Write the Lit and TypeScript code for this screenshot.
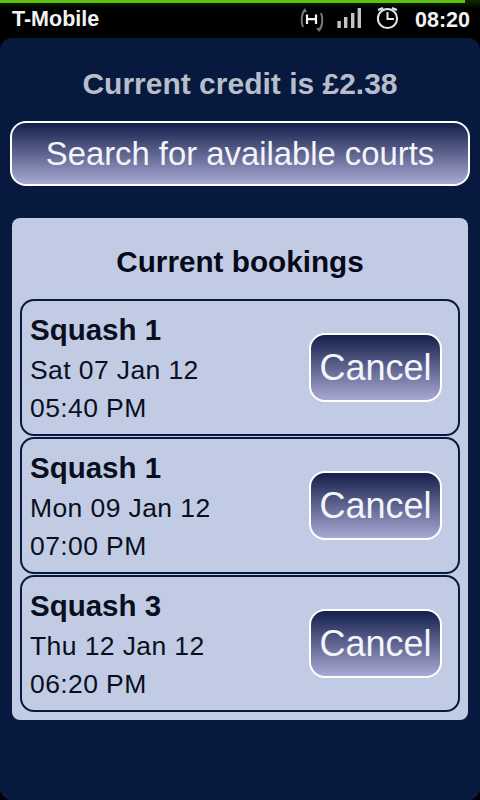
import { LitElement, html, css } from "lit";
import { customElement } from "lit/decorators.js";

const bookings = [
  { court: "Squash 1", date: "Sat 07 Jan 12", time: "05:40 PM" },
  { court: "Squash 1", date: "Mon 09 Jan 12", time: "07:00 PM" },
  { court: "Squash 3", date: "Thu 12 Jan 12", time: "06:20 PM" },
];

@customElement("app-root")
export class AppRoot extends LitElement {
  static styles = css`
    :host {
      display: block;
      width: 480px;
      height: 800px;
      background: #000;
      font-family: "Liberation Sans", Arial, sans-serif;
      overflow: hidden;
    }
    .status {
      height: 38px;
      box-sizing: border-box;
      position: relative;
      display: flex;
      align-items: center;
      padding: 0 10px 0 12px;
      color: #f2f2f2;
      background: linear-gradient(#0c2a00 0, #000 9px);
    }
    .progress {
      position: absolute;
      left: 0;
      top: 0;
      width: 465px;
      height: 3px;
      background: #5fc00e;
    }
    .carrier {
      font-size: 21.5px;
      font-weight: bold;
      flex: 1;
    }
    .icons {
      display: flex;
      align-items: center;
    }
    .icons svg {
      display: block;
    }
    .hicon { margin-right: 12px; }
    .signal { margin-right: 15px; }
    .alarm { margin-right: 16px; }
    .clock {
      font-size: 21.5px;
      font-weight: bold;
      padding-top: 2px;
    }
    .main {
      height: 762px;
      box-sizing: border-box;
      background: #07193f;
      border-radius: 12px;
      padding: 29px 10px 0;
    }
    .credit {
      text-align: center;
      color: #b8bec9;
      font-size: 30px;
      font-weight: bold;
      line-height: 34px;
    }
    .search, .cancel {
      box-sizing: border-box;
      color: #f4f5fa;
      border: 2px solid #fff;
      background: linear-gradient(#141f4b 0%, #a8a9d4 100%);
      font-family: inherit;
      padding: 0;
      display: block;
    }
    .search {
      width: 460px;
      height: 65px;
      margin-top: 20px;
      border-radius: 16px;
      font-size: 32.8px;
    }
    .panel {
      box-sizing: border-box;
      margin: 32px 2px 0;
      height: 502px;
      background: #c1cce4;
      border-radius: 8px;
      padding: 0 8px;
      color: #0a0f20;
    }
    .panel h2 {
      margin: 0;
      height: 81px;
      box-sizing: border-box;
      padding-top: 26px;
      text-align: center;
      font-size: 29.7px;
      line-height: 36px;
      font-weight: bold;
      color: #05091a;
    }
    .list {
      display: flex;
      flex-direction: column;
      gap: 1px;
    }
    .card {
      box-sizing: border-box;
      height: 137px;
      border: 2px solid #07193f;
      border-radius: 14px;
      display: flex;
      align-items: center;
      justify-content: space-between;
      padding: 0 16px 0 8px;
    }
    .info {
      padding-top: 2px;
    }
    .court {
      font-size: 29.5px;
      font-weight: bold;
      line-height: 38px;
      margin-bottom: 2px;
    }
    .line {
      font-size: 26.5px;
      line-height: 38px;
      letter-spacing: 0.4px;
    }
    .cancel {
      width: 133px;
      height: 69px;
      border-radius: 16px;
      font-size: 36px;
    }
  `;

  render() {
    return html`
      <div class="status">
        <div class="progress"></div>
        <div class="carrier">T-Mobile</div>
        <div class="icons">
          <svg class="hicon" width="26" height="38" viewBox="0 0 26 38">
            <path d="M6 10 C2 14 2 22 4 27 M20 30 C24 26 24 18 22 13" stroke="#777" stroke-width="2" fill="none"/>
            <path d="M6 8 L3 12 L8 12 Z M20 32 L17 28 L23 28 Z" fill="#777"/>
            <path d="M8 14.5 V24 M17 14.5 V24 M8 19.2 H17" stroke="#f2f2f2" stroke-width="2.2" fill="none"/>
          </svg>
          <svg class="signal" width="24" height="38" viewBox="0 0 24 38">
            <rect x="0.4" y="21" width="3.4" height="7" fill="#c4c4c4"/>
            <rect x="7" y="17" width="3.4" height="11" fill="#c4c4c4"/>
            <rect x="14" y="13" width="3.4" height="15" fill="#c4c4c4"/>
            <rect x="20.6" y="8" width="3.4" height="20" fill="#c4c4c4"/>
          </svg>
          <svg class="alarm" width="23" height="38" viewBox="0 0 23 38">
            <circle cx="11.5" cy="18.5" r="9.6" stroke="#e6e6e6" stroke-width="2" fill="none"/>
            <path d="M11.5 12 V19 H18" stroke="#e6e6e6" stroke-width="2" fill="none"/>
            <path d="M2 10 L7 8 M21 10 L16 8" stroke="#e6e6e6" stroke-width="2.4" fill="none"/>
          </svg>
          <span class="clock">08:20</span>
        </div>
      </div>
      <div class="main">
        <div class="credit">Current credit is £2.38</div>
        <button class="search">Search for available courts</button>
        <div class="panel">
          <h2>Current bookings</h2>
          <div class="list">
            ${bookings.map(
              (b) => html`
                <div class="card">
                  <div class="info">
                    <div class="court">${b.court}</div>
                    <div class="line">${b.date}</div>
                    <div class="line">${b.time}</div>
                  </div>
                  <button class="cancel">Cancel</button>
                </div>
              `
            )}
          </div>
        </div>
      </div>
    `;
  }
}
